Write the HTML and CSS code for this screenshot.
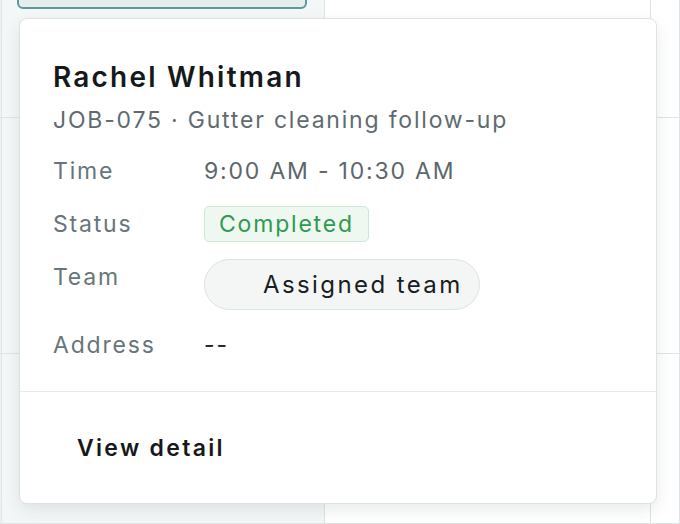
FILE: index.html
```html
<!DOCTYPE html>
<html lang="en">
<head>
  <meta charset="UTF-8" />
  <title>Job preview</title>
  <link rel="stylesheet" href="styles.css">
</head>
<body>
  <div class="calendar">
    <div class="gutter"></div>
    <div class="cell today">
      <div class="event"></div>
    </div>
    <div class="cell"></div>
    <div class="cell"></div>

    <div class="gutter"></div>
    <div class="cell today"></div>
    <div class="cell"></div>
    <div class="cell"></div>

    <div class="gutter"></div>
    <div class="cell today"></div>
    <div class="cell"></div>
    <div class="cell"></div>
  </div>

  <div class="popover">
    <div class="popover-body">
      <h2 class="job-name">Rachel Whitman</h2>
      <div class="job-sub">JOB-075 · Gutter cleaning follow-up</div>

      <div class="details">
        <div class="label">Time</div>
        <div class="value">9:00 AM - 10:30 AM</div>

        <div class="label">Status</div>
        <div class="value"><span class="badge">Completed</span></div>

        <div class="label">Team</div>
        <div class="value"><span class="team-pill">Assigned team</span></div>

        <div class="label">Address</div>
        <div class="value dark">--</div>
      </div>
    </div>
    <div class="popover-footer">
      <button class="link-btn">View detail</button>
    </div>
  </div>
</body>
</html>
```

FILE: styles.css
```css
body {
  margin: 0;
  background: #fff;
  font-family: Inter, "Noto Sans", sans-serif;
  letter-spacing: 1.8px;
  overflow: hidden;
}

.calendar {
  display: grid;
  grid-template-columns: 2px 323px 326px 1fr;
  grid-template-rows: 118px 236px 1fr;
  height: 524px;
}

.gutter {
  background: #eef2f2;
  border-right: 1px solid #dfe4e4;
  border-bottom: 1px solid #dfe4e4;
}

.cell {
  position: relative;
  border-right: 1px solid #dfe4e4;
  border-bottom: 1px solid #dfe4e4;
}

.cell.today {
  background: #f4f7f7;
}

.event {
  position: absolute;
  left: 15px;
  top: -20px;
  width: 286px;
  height: 25px;
  background: #e5eded;
  border: 2px solid #5e979c;
  border-radius: 6px;
}

.popover {
  position: absolute;
  left: 19px;
  top: 18px;
  width: 636px;
  height: 484px;
  background: #fff;
  border: 1px solid #dde2e2;
  border-radius: 8px;
  box-shadow: 0 6px 16px rgba(30, 45, 45, 0.10);
  display: flex;
  flex-direction: column;
}

.popover-body {
  padding: 41px 33px 28px;
  border-bottom: 1px solid #e6eaea;
}

.job-name {
  margin: 0;
  font-size: 28px;
  font-weight: 600;
  line-height: 35px;
  letter-spacing: 2.2px;
  color: #16191b;
}

.job-sub {
  margin-top: 10px;
  font-size: 23px;
  line-height: 30px;
  color: #5f6b70;
}

.details {
  display: grid;
  grid-template-columns: 151px 1fr;
  row-gap: 17px;
  margin-top: 18px;
  font-size: 23px;
  line-height: 36px;
}

.label {
  color: #67757a;
}

.value {
  color: #5c676c;
  display: flex;
  align-items: flex-start;
}

.value.dark {
  color: #1d2224;
}

.badge {
  display: inline-block;
  padding: 0 14px 0 14px;
  line-height: 34px;
  border: 1px solid #cbead4;
  background: #eef8f1;
  color: #2f9a50;
  border-radius: 5px;
}

.team-pill {
  display: inline-block;
  padding: 0 16px 0 58px;
  line-height: 49px;
  font-size: 24px;
  letter-spacing: 2.4px;
  border: 1px solid #dde2e2;
  background: #f4f6f6;
  color: #1a1d1f;
  border-radius: 26px;
}

.popover-footer {
  flex: 1;
  display: flex;
  align-items: center;
  padding: 0 33px;
}

.link-btn {
  background: none;
  border: none;
  font-family: inherit;
  font-size: 23px;
  font-weight: 600;
  letter-spacing: 2.3px;
  color: #16191b;
  padding: 10px 24px;
  cursor: pointer;
}
```
